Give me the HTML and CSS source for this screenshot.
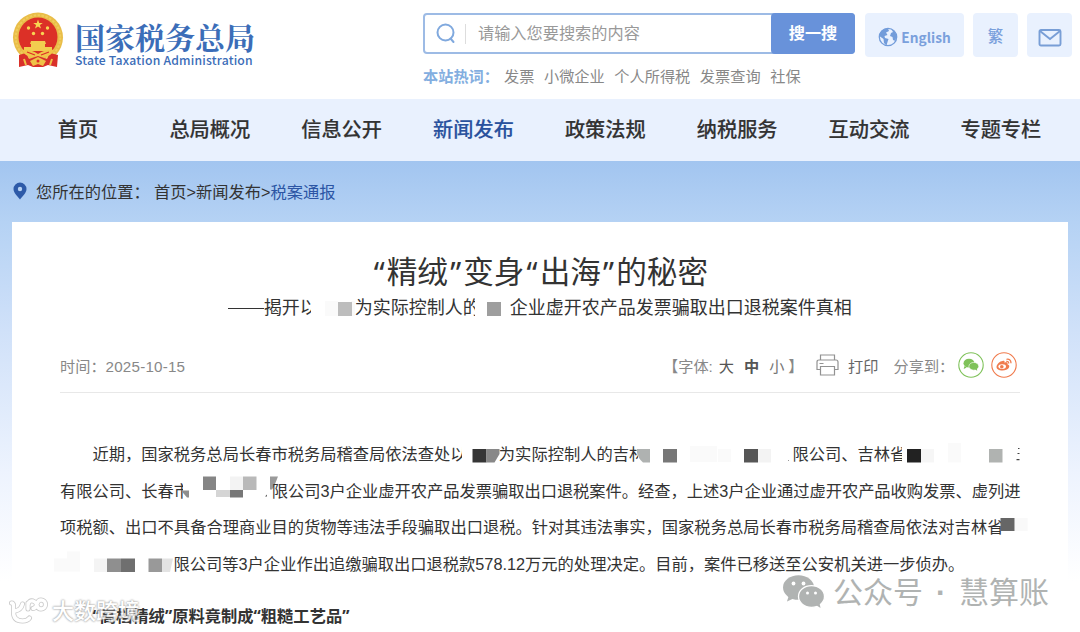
FILE: index.html
```html
<!DOCTYPE html>
<html lang="zh-CN">
<head>
<meta charset="utf-8">
<title>国家税务总局</title>
<link rel="stylesheet" href="styles.css">
</head>
<body>
<div class="page">
  <header class="header">
    <div class="brand">
      <svg class="emblem" width="52" height="57" viewBox="0 0 52 57">
        <circle cx="26" cy="25.5" r="25" fill="#e9bd48"/>
        <circle cx="26" cy="25.5" r="22.3" fill="none" stroke="#f0cc5c" stroke-width="2" stroke-dasharray="2.5 1.5"/>
        <circle cx="26" cy="25" r="19.5" fill="#dc3027"/>
        <path d="M7 43 L14 41 L17 47 L26 44 L35 47 L38 41 L46 43 L45 55 L36 53 L31 55 H21 L16 53 L7 55Z" fill="#d9302a"/>
        <path d="M26 7.500l1.200 3.400h3.600l-2.900 2.200 1.100 3.500-3-2.100-3 2.100 1.100-3.500-2.900-2.200h3.600z" fill="#f8d653"/>
        <g fill="#f8d653"><circle cx="16.500" cy="16" r="1.700"/><circle cx="35.500" cy="16" r="1.700"/><circle cx="21.500" cy="21.500" r="1.700"/><circle cx="30.500" cy="21.500" r="1.700"/></g>
        <path d="M19 29h14l1 3h-1v3h7v4H12v-4h7v-3h-1z" fill="#f2cd4f"/>
        <path d="M10 38q8-1 16 4 8-5 16-4-3 7-11 7l-5-1-5 1q-8 0-11-7z" fill="#f2c64a"/>
        <path d="M15 40l8 3M37 40l-8 3" stroke="#dc3027" stroke-width="1.200"/>
        <path d="M18 49l8-4 8 4-3 5-5-2-5 2z" fill="#efc247"/>
        <circle cx="26" cy="49" r="1.500" fill="#dc3027"/>
        <path d="M12 47l2 6M40 47l-2 6" stroke="#efc247" stroke-width="2"/>
      </svg>
      <div class="brand-text">
        <div class="brand-name">国家税务总局</div>
        <div class="brand-en">State Taxation Administration</div>
      </div>
    </div>
    <div class="tools">
      <div class="tool-row">
        <div class="search">
          <svg class="search-icon" width="20" height="21" viewBox="0 0 20 21" fill="none" stroke="#80a9de" stroke-width="2"><circle cx="9.500" cy="9.500" r="8"/><path d="M14.500 15.500l3 3.500" stroke-linecap="round"/></svg>
          <span class="search-hint">请输入您要搜索的内容</span>
          <span class="search-btn">搜一搜</span>
        </div>
        <div class="tool english">
          <svg width="20" height="20" viewBox="0 0 20 20"><circle cx="10" cy="10" r="8.700" fill="#e9f1fe" stroke="#729cda" stroke-width="1.300"/><path d="M2 6Q5 1 10 1.500L11 4 8 5.500 9.500 8 6.500 9 7 11 10.500 12 9.500 15 8.500 18.500 6 16 5.500 12 2 9.500z" fill="#729cda"/><path d="M13 2q4 2 5.500 6l-1 6-2.500-1-.5-3-2.500-1 1-3 2-1z" fill="#729cda"/></svg>
          <span>English</span>
        </div>
        <div class="tool square">繁</div>
        <div class="tool square">
          <svg width="24" height="18" viewBox="0 0 24 18" fill="none" stroke="#789ed6" stroke-width="1.900"><rect x="1.500" y="1" width="21" height="15.500" rx="1.500"/><path d="M2 2l10 8 10-8"/></svg>
        </div>
      </div>
      <div class="hot"><b>本站热词：</b><span>发票</span><span>小微企业</span><span>个人所得税</span><span>发票查询</span><span>社保</span></div>
    </div>
  </header>
  <nav class="nav"><a>首页</a><a>总局概况</a><a>信息公开</a><a class="on">新闻发布</a><a>政策法规</a><a>纳税服务</a><a>互动交流</a><a>专题专栏</a></nav>
  <main class="main">
    <div class="crumb">
      <svg width="14" height="18" viewBox="0 0 14 18"><path d="M7 .5a6.500 6.500 0 0 1 6.500 6.500c0 4-4 7-6.500 10.500C4.500 14 .5 11 .5 7A6.500 6.500 0 0 1 7 .5z" fill="#2d5aa8"/><circle cx="7" cy="7" r="2.200" fill="#b7d2f3"/></svg>
      <span class="crumb-label">您所在的位置：</span><span>首页<i>&gt;</i>新闻发布<i>&gt;</i><em>税案通报</em></span>
    </div>
    <article class="card">
      <h1 class="title"><span class="q">“</span>精绒<span class="q">”</span>变身<span class="q">“</span>出海<span class="q">”</span>的秘密</h1>
      <div class="subtitle">
        <span class="dash"></span><span>揭开</span><span class="cut sub-a">以</span>
        <svg class="mosaic" width="44" height="28" viewBox="311 293 44 28"><path d="M325 300h13v15h-13zM351 300h4v15h-4z" fill="#fafafa"/><path d="M338 301h14v14h-14z" fill="#bdbdbd"/></svg>
        <span>为实际控制人</span><span class="cut sub-b">的</span>
        <svg class="mosaic" width="35" height="28" viewBox="475 293 35 28"><path d="M487 301h14v14h-14z" fill="#9e9e9e"/></svg>
        <span>企业虚开农产品发票骗取出口退税案件真相</span>
      </div>
      <div class="meta">
        <span class="time">时间：<span class="date">2025-10-15</span></span>
        <span class="sizes"><span class="brk">【</span>字体: <a>大</a><a class="cur">中</a><a class="small">小</a><span class="brk end">】</span></span>
        <svg class="printer" width="23" height="22" viewBox="0 0 23 22" fill="none" stroke="#929292" stroke-width="1.200"><path d="M4.500 6V1h14v5M4.500 15.500H1V8q0-2 2-2h17q2 0 2 2v7.500h-3.500M4.500 12.500h14V21h-14zM3.500 9.500h4"/></svg>
        <span class="print">打印</span>
        <span class="share">分享到：</span>
        <svg class="wechat" width="26" height="26" viewBox="0 0 26 26"><circle cx="13" cy="13" r="12.200" fill="#fff" stroke="#7fc25a" stroke-width="1.100"/><path d="M6.500 14l-.8 3 3-1.500z" fill="#7fc25a"/><ellipse cx="11" cy="11.200" rx="5.500" ry="4.400" fill="#7fc25a"/><ellipse cx="15.800" cy="14.300" rx="4.900" ry="3.900" fill="#7fc25a" stroke="#fff" stroke-width=".6"/><path d="M17 17.500l2.200 1.300-.3-2.300z" fill="#7fc25a"/></svg>
        <svg class="weibo" width="26" height="26" viewBox="0 0 26 26"><circle cx="13" cy="13" r="12.200" fill="#fff" stroke="#f07b4d" stroke-width="1.100"/><path d="M11.500 9c1.500-.5 2.500 0 2 1.700 2-.8 3.700-.2 3 1.500 4 1.300 1 6.300-5 6.300-3.600 0-6-1.500-6-3.600C5.500 12.500 9 9 11.500 9z" fill="#f07b4d"/><ellipse cx="11.200" cy="14.600" rx="3.800" ry="2.400" fill="#fff"/><circle cx="10.800" cy="14.800" r="1.800" fill="#f07b4d"/><path d="M15.500 7.300q4.500-.7 4.500 4M15.300 9.500q2.500-.3 2.400 2" fill="none" stroke="#f07b4d" stroke-width="1.300"/></svg>
      </div>
      <div class="body">
        <div class="line indent"><span>近期，国家税务总局长春市税务局稽查局依法查处</span><span class="cut c12">以</span>
          <svg class="mosaic" width="36.500" height="36" viewBox="462.500 437 36.500 36"><path d="M473 450h14v13.500h-14z" fill="#363636"/><path d="M487 450h13v5l-5 8.500h-8z" fill="#888"/></svg>
          <span>为实际控制人的吉</span><span class="cut c9">林</span>
          <svg class="mosaic" width="154.500" height="36" viewBox="638 437 154.500 36"><path d="M690 447h27v16h-27zM718 450h13v13h-13z" fill="#fafafa"/><path d="M637 450h13v13.500h-7q-5-4-6-10z" fill="#afb2b1"/><path d="M663 450h14v13.500h-14z" fill="#777"/><path d="M744 450h14v13.500h-14z" fill="#565656"/><path d="M758 450h13v13.500h-13z" fill="#f3f3f3"/><path d="M788 461h1v1h-1z" fill="#999"/></svg>
          <span>限公司、吉林</span><span class="cut c12">省</span>
          <svg class="mosaic" width="118" height="36" viewBox="902 437 118 36"><path d="M907 450h14v13.500h-14z" fill="#222"/><path d="M921 450h13v13.500h-13z" fill="#f6f6f6"/><path d="M948 444h13v19.500h-13z" fill="#fafafa"/><path d="M989 450h13.500v13.500H989z" fill="#b0b3b1"/><path d="M1018 449h1.500v1h-1.500zM1017.500 454h2v1h-2zM1016.500 460h3v1.200h-3z" fill="#444"/></svg>
        </div>
        <div class="line"><span>有限公司、长春</span><span class="cut c9">市</span>
          <svg class="mosaic" width="89" height="36" viewBox="183 473.500 89 36"><path d="M230 477h13v13.500h-13z" fill="#f3f3f3"/><path d="M203 477h13v13.500h-13z" fill="#858585"/><path d="M243 477h13.500v13.500H243z" fill="#b9b9b9"/><path d="M181 491h8v7h-2z" fill="#8f8f8f"/><path d="M216 490.500h14v7h-14z" fill="#d5d5d5"/><path d="M230 490.500h13v7.500h-13z" fill="#777"/><path d="M270 477h8l-4 10-2 3h-2z" fill="#9a9a9a"/><path d="M265 497l2-2v2z" fill="#555"/></svg>
          <span class="tight">限公司3户企业虚开农产品发票骗取出口退税案件。经查，上述3户企业通过虚开农产品收购发票、虚列进</span>
        </div>
        <div class="line"><span>项税额、出口不具备合理商业目的货物等违法手段骗取出口退税。针对其违法事实，国家税务总局长春市税务局稽查局依法对吉林省</span>
          <svg class="mosaic" width="16" height="36" viewBox="1004 510 16 36"><path d="M1001.500 519h14.200v13h-14.200z" fill="#666"/><path d="M1015.700 519h13v13h-13z" fill="#f9f9f9"/></svg>
        </div>
        <div class="line">
          <svg class="mosaic" width="113.500" height="36" viewBox="60 546.500 113.500 36"><path d="M54 559h13v13H54zM67 552h13v20H67z" fill="#fafafa"/><path d="M94 559h13v13.500H94z" fill="#f4f4f4"/><path d="M107 559h14v13.500h-14z" fill="#8f8f8f"/><path d="M121 559h14v13.500h-14z" fill="#6f6f6f"/><path d="M148.500 559h13.500v13.500h-13.500z" fill="#999"/><path d="M162 559h11l-3 13.500h-8z" fill="#e3e3e3"/></svg>
          <span>限公司等3户企业作出追缴骗取出口退税款578.12万元的处理决定。目前，案件已移送至公安机关进一步侦办。</span>
        </div>
        <div class="line indent lead"><span><span class="q">“</span>高档精绒<span class="q">”</span>原料竟制成<span class="q">“</span>粗糙工艺品<span class="q">”</span></span></div>
      </div>
    </article>
  </main>
  <div class="mark-left">
    <svg width="40" height="28" viewBox="0 0 40 28" fill="none" stroke-linecap="round" stroke-linejoin="round"><g stroke="#bdbdbd" stroke-width="5"><path d="M2.500 6q2 0 2 3v6q0 9 9 9 5 0 7-3M6 14q6-1 7.500-7"/><path d="M19 12V6M19 8q1-5 5-4 3 1 4 4.500t4 3.500a4.500 4.500 0 0 0 0-9q-3 0-4 4t-4 4.500"/></g><g stroke="#fff" stroke-width="3.400"><path d="M2.500 6q2 0 2 3v6q0 9 9 9 5 0 7-3M6 14q6-1 7.500-7"/><path d="M19 12V6M19 8q1-5 5-4 3 1 4 4.500t4 3.500a4.500 4.500 0 0 0 0-9q-3 0-4 4t-4 4.500"/></g></svg>
    <span>大数跨境</span>
  </div>
  <div class="mark-right">
    <svg width="43" height="35" viewBox="0 0 43 35"><path d="M7 21L5 27.500l6.500-3z" fill="#aaadac"/><ellipse cx="16.500" cy="13.500" rx="15.500" ry="12.300" fill="#aaadac"/><ellipse cx="29.500" cy="22.500" rx="13" ry="10.800" fill="#aaadac" stroke="#fff" stroke-width="1.300"/><path d="M34 31l4.500 3-1-5z" fill="#aaadac"/><g fill="#fff"><circle cx="11.500" cy="9.500" r="1.900"/><circle cx="21.500" cy="9.500" r="1.900"/><circle cx="25.500" cy="19" r="1.500"/><circle cx="33.500" cy="19" r="1.500"/></g></svg>
    <span class="mr-a">公众号</span><span class="mr-dot">·</span><span>慧算账</span>
  </div>
</div>
</body>
</html>
```
FILE: styles.css
```css
* { box-sizing: border-box; }
body {
  margin: 0;
  font-family: "Liberation Sans", "Noto Sans CJK SC", sans-serif;
  color: #333;
  background: #fff;
}
svg { display: block; flex: none; }
.page { position: relative; width: 1080px; height: 632px; overflow: hidden; }

.header { display: flex; height: 99px; padding: 12px 0 0 12px; }
.brand { display: flex; width: 411px; }
.brand-text { padding: 8px 0 0 11px; color: #3b6db8; white-space: nowrap; }
.brand-name { font: 700 30px/32px "Noto Serif CJK SC", "Noto Sans CJK SC", serif; }
.brand-en { font: 500 12.200px/14px "Noto Sans CJK SC", sans-serif; letter-spacing: .2px; margin-top: 1px; }
.tool-row { display: flex; align-items: flex-start; padding-top: 1px; }
.search {
  display: flex; align-items: center; width: 432px; height: 41px;
  border: 2px solid #9dbbe5; border-radius: 4px; padding-left: 11px;
}
.search-hint {
  flex: 1; height: 20px; margin-left: 9px; padding-left: 12px;
  border-left: 1px solid #ddd; font-size: 16.200px; line-height: 19px; color: #999;
}
.search-btn {
  width: 84px; height: 41px; margin-right: -2px; border-radius: 4px; background: #6892da;
  color: #fff; font-size: 16.200px; font-weight: 700; line-height: 41px; text-align: center;
}
.tool {
  display: flex; align-items: center; justify-content: center; height: 44px;
  border-radius: 4px; background: #e9f1fe; color: #7aa0dc;
  font: 500 15.500px/20px "Noto Sans CJK SC", sans-serif;
}
.english { width: 99px; margin: 0 9px 0 10px; gap: 3px; padding-top: 4px; font-weight: 700; font-size: 13.700px; }
.square { width: 45px; }
.square + .square { margin-left: 9px; }
.square svg { margin-top: 5px; }
.hot { display: flex; margin-top: 9px; font-size: 15.200px; line-height: 22px; color: #888; white-space: nowrap; }
.hot b { width: 81px; color: #83aee0; }
.hot span { margin-right: 9.600px; }

.nav {
  display: grid; grid-template-columns: repeat(8, 131.850px); height: 62px; padding-left: 12px;
  background: #e9f1fe; font: 500 20.200px/60px "Noto Sans CJK SC", sans-serif; text-align: center;
}
.nav a { -webkit-text-stroke: .15px currentColor; }
.nav .on { color: #29519d; }

.main {
  height: 471px; padding-left: 12px;
  background: linear-gradient(#a2c5f0 0, #b5d2f4 61px, #d0e1f9 170px, #edf3fe 310px, #fff 420px);
}
.crumb { display: flex; align-items: center; height: 61px; padding: 0 0 2px 1px; font-size: 16.250px; white-space: nowrap; }
.crumb-label { width: 118px; margin-left: 9px; }
.crumb i { font-style: normal; }
.crumb em { font-style: normal; color: #2b55a4; }

.card { width: 1055.500px; height: 410px; padding-top: 28px; background: #fff; }
.title { display: flex; justify-content: center; margin: 0; font-size: 30.600px; font-weight: 400; line-height: 44px; }
.q { display: inline-block; width: .5em; font-family: "Noto Sans", sans-serif; line-height: 1; text-align: center; }
.title .q { line-height: 44px; }
.subtitle { display: flex; justify-content: center; height: 28px; font-size: 18px; line-height: 28px; white-space: nowrap; }
.dash { width: 36px; height: 1px; margin-top: 14px; background: #333; }
.cut { flex: none; overflow: hidden; }
.sub-a { width: 11px; }
.sub-b { width: 12px; }
.mosaic { overflow: visible; }
.meta {
  display: flex; align-items: center; width: 960px; height: 54px; margin: 17px 0 0 48px; padding: 0 3px 1px 0;
  border-bottom: 1px solid #e8e8e8; font-size: 15.200px; color: #888; white-space: nowrap;
}
.time { flex: 1; }
.date { letter-spacing: .2px; }
.sizes { display: flex; width: 153px; }
.brk { width: 15.200px; }
.sizes a { margin-left: 6px; color: #555; }
.sizes a.cur { margin-left: 10px; font-weight: 700; }
.sizes a.small { margin-left: 10px; color: #777; }
.brk.end { margin-left: 4px; }
.print { width: 45.500px; margin-left: 9px; color: #666; }
.share { width: 64.500px; }
.weibo { margin-left: 7px; }

.body { margin: 43px 0 0 48px; }
.line { display: flex; width: 970px; height: 36.500px; font-size: 16.270px; line-height: 36.500px; white-space: nowrap; }
.line > span { flex: none; }
.line > .tight { letter-spacing: -.03px; }
.indent { padding-left: 32.500px; }
.c12 { width: 12px; }
.c9 { width: 9px; }
.lead { margin-top: 16px; font-weight: 700; }
.lead .q { width: .45em; }

.mark-left {
  position: absolute; left: 9px; top: 597px; display: flex; gap: 3px; opacity: .8;
  font-size: 22px; line-height: 30px; font-weight: 500; color: #fff;
  text-shadow: 0 0 2px #888, 0 0 2px #999;
}
.mark-right {
  position: absolute; left: 782px; top: 574px; display: flex;
  font-size: 30px; line-height: 37px; color: #aaadac; opacity: .92; white-space: nowrap;
}
.mr-a { margin-left: 8px; }
.mr-dot { width: 36px; text-align: center; font-weight: 700; }
```
